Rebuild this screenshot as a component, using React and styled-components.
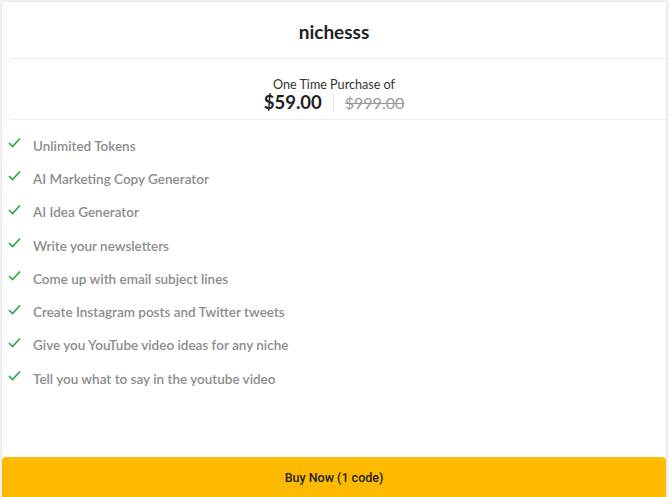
import React from 'react'
import styled, { createGlobalStyle } from 'styled-components'

const GlobalStyle = createGlobalStyle`
  html, body {
    margin: 0;
    padding: 0;
    background: #f4f4f4;
    font-family: Lato, "Open Sans", sans-serif;
  }
`

const Card = styled.div`
  margin: 2px 3px 0 2px;
  height: calc(100vh - 2px);
  background: #fff;
  box-shadow: 0 0 2px rgba(0, 0, 0, 0.12);
  display: flex;
  flex-direction: column;
`

const Title = styled.div`
  height: 56px;
  display: flex;
  align-items: center;
  justify-content: center;
  font-size: 19px;
  font-weight: 700;
  color: #222;
  padding-top: 2px;
  box-sizing: border-box;
`

const Divider = styled.hr`
  margin: 0 0 0 8px;
  border: none;
  border-top: 1px solid #eeeeee;
`

const PriceBox = styled.div`
  height: 60px;
  display: flex;
  flex-direction: column;
  align-items: center;
  justify-content: center;
  padding-top: 12px;
  box-sizing: border-box;
`

const Caption = styled.div`
  font-size: 12.6px;
  color: #333;
  line-height: 15px;
`

const PriceRow = styled.div`
  display: flex;
  align-items: center;
  gap: 11px;
  line-height: 21px;
`

const Price = styled.span`
  font-size: 18.5px;
  font-weight: 700;
  color: #222;
`

const Sep = styled.span`
  width: 1px;
  height: 17px;
  background: #e2e2e2;
`

const OldPrice = styled.span`
  font-size: 16px;
  color: #999;
  text-decoration: line-through;
`

const List = styled.ul`
  list-style: none;
  margin: 0;
  padding: 9px 0 0 6px;
`

const Item = styled.li`
  display: flex;
  align-items: center;
  height: 33.3px;
  font-size: 13.5px;
  font-weight: 600;
  color: #8c8c8c;
`

const Check = styled.svg`
  width: 13px;
  height: 11px;
  margin-right: 12px;
  margin-top: -6px;
  flex: none;
`

const BuyButton = styled.button`
  margin-top: auto;
  height: 40px;
  border: none;
  border-radius: 4px 4px 0 0;
  background: #fdba00;
  color: #222;
  font-family: Roboto, sans-serif;
  font-size: 12.5px;
  font-weight: 500;
  cursor: pointer;
  padding-bottom: 1px;
`

const features = [
  'Unlimited Tokens',
  'AI Marketing Copy Generator',
  'AI Idea Generator',
  'Write your newsletters',
  'Come up with email subject lines',
  'Create Instagram posts and Twitter tweets',
  'Give you YouTube video ideas for any niche',
  'Tell you what to say in the youtube video',
]

export default function App() {
  return (
    <>
      <GlobalStyle />
      <Card>
        <Title>nichesss</Title>
        <Divider />
        <PriceBox>
          <Caption>One Time Purchase of</Caption>
          <PriceRow>
            <Price>$59.00</Price>
            <Sep />
            <OldPrice>$999.00</OldPrice>
          </PriceRow>
        </PriceBox>
        <Divider />
        <List>
          {features.map((f) => (
            <Item key={f}>
              <Check viewBox="0 0 13 11">
                <path d="M1 6l3.5 3.5L12 1.5" fill="none" stroke="#26a83c" strokeWidth="1.6" />
              </Check>
              {f}
            </Item>
          ))}
        </List>
        <BuyButton>Buy Now (1 code)</BuyButton>
      </Card>
    </>
  )
}
